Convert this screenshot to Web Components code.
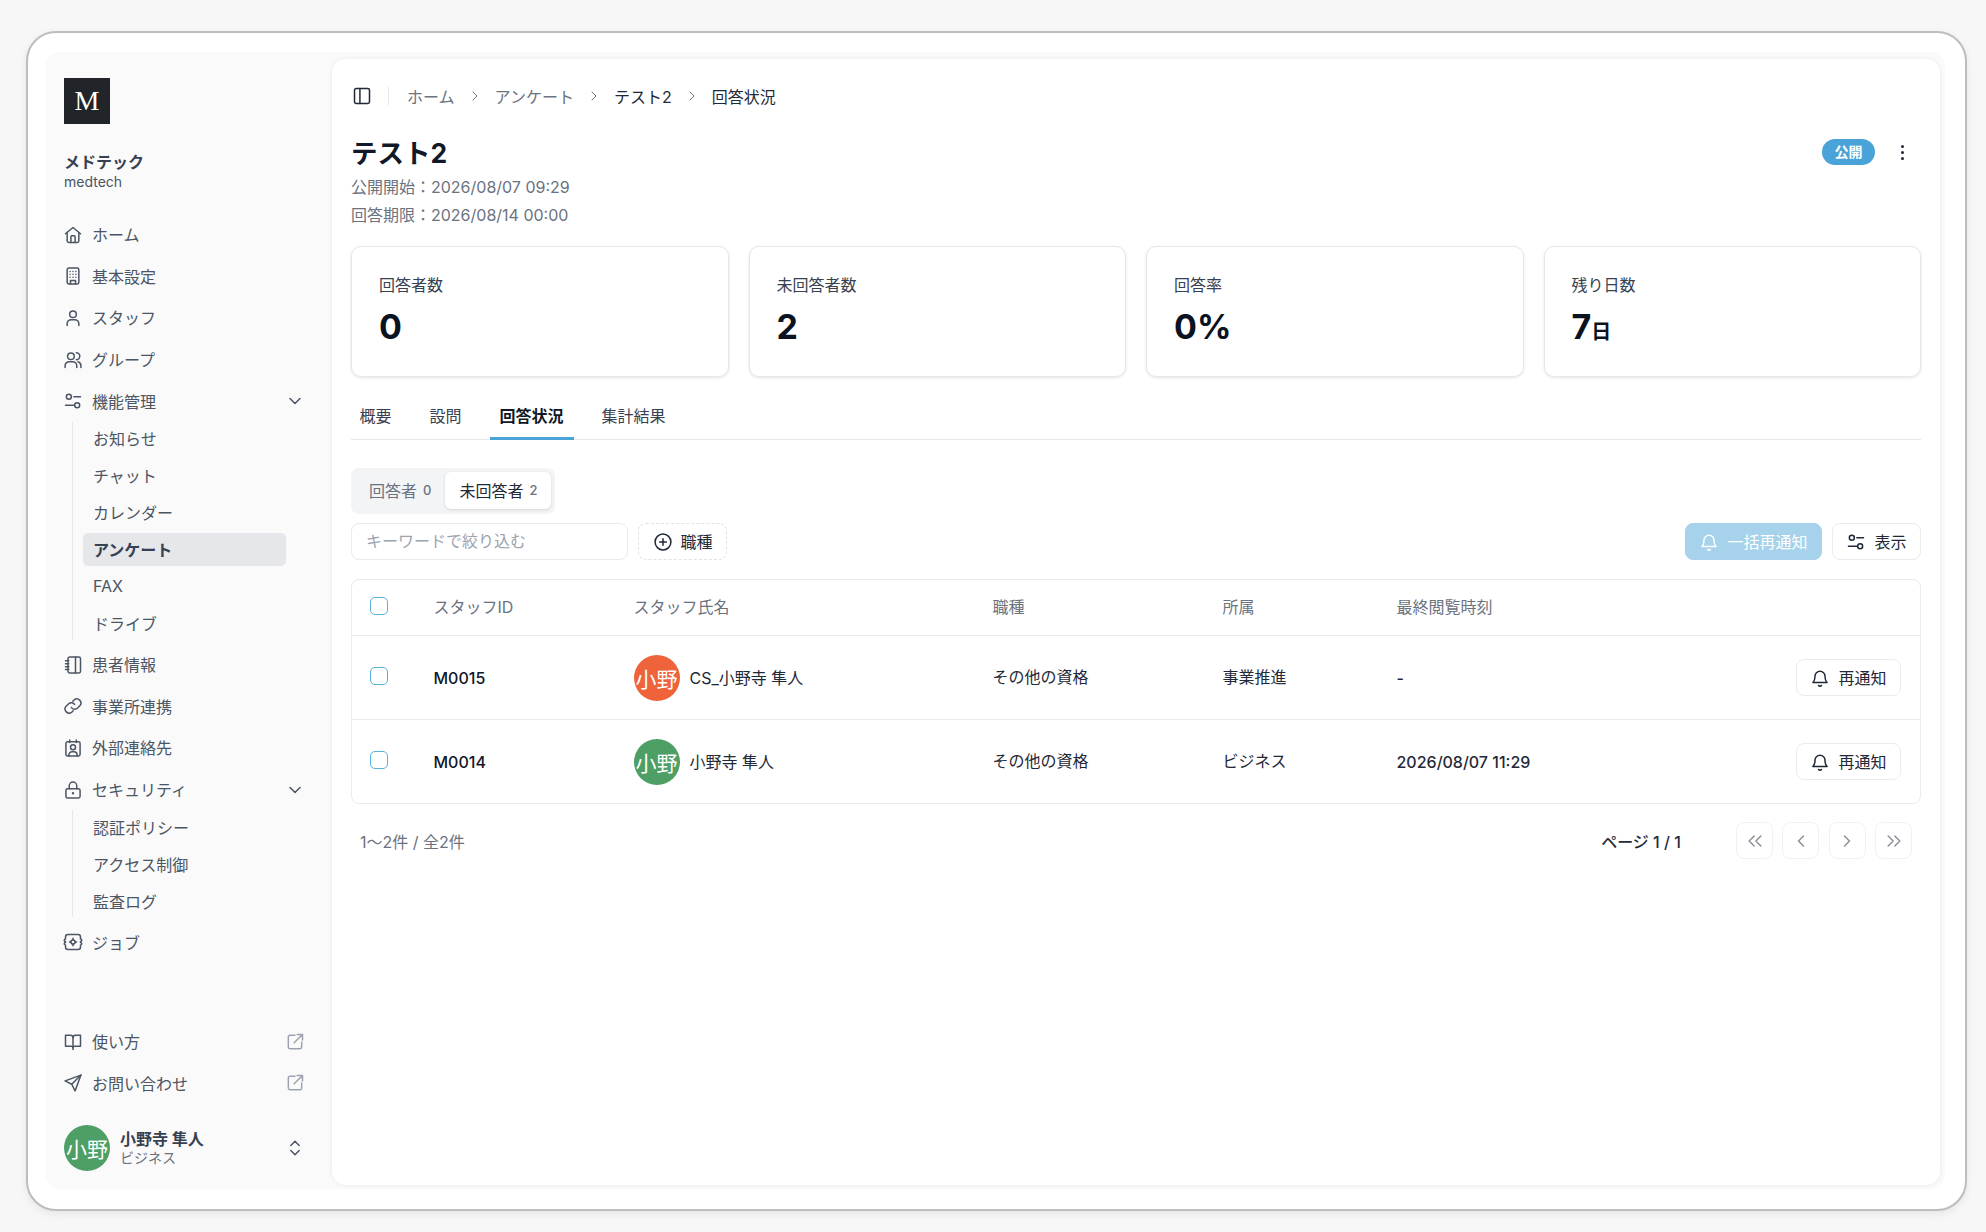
<!DOCTYPE html>
<html lang="ja">
<head>
<meta charset="utf-8">
<title>回答状況</title>
<style>
    html, body { margin: 0; height: 100%; }
    body {
        background: #f7f7f7;
        font-family: Inter, "Noto Sans CJK JP", sans-serif;
        color: #111827;
    }
</style>
</head>
<body>
<app-window>
    <app-sidebar slot="side"></app-sidebar>
    <survey-page></survey-page>
</app-window>

<script>
const ICONS = {
    home: '<path d="M3 10.5 12 3l9 7.5"/><path d="M5 9v10a2 2 0 0 0 2 2h10a2 2 0 0 0 2-2V9"/><path d="M9.5 21v-7a1 1 0 0 1 1-1h3a1 1 0 0 1 1 1v7"/>',
    building: '<rect x="5" y="2.5" width="14" height="19" rx="2"/><path d="M9 21.5v-4h6v4M8.5 6.5h.01M12 6.5h.01M15.5 6.5h.01M8.5 10h.01M12 10h.01M15.5 10h.01M8.5 13.5h.01M12 13.5h.01M15.5 13.5h.01"/>',
    user: '<circle cx="12" cy="7.5" r="4"/><path d="M5 21v-2a5 5 0 0 1 5-5h4a5 5 0 0 1 5 5v2"/>',
    users: '<circle cx="9.5" cy="7.5" r="4"/><path d="M2.5 21v-2a5 5 0 0 1 5-5h4a5 5 0 0 1 5 5v2"/><path d="M16 3.3a4 4 0 0 1 0 8.3M21.5 21v-2a5 5 0 0 0-3.5-4.8"/>',
    sliders: '<circle cx="7" cy="7" r="3"/><circle cx="17" cy="17" r="3"/><path d="M13 7h8M3 17h10"/>',
    notebook: '<rect x="6" y="2.5" width="15" height="19" rx="2"/><path d="M15 2.5v19M3 7h4M3 10.5h4M3 14h4M3 17.5h4"/>',
    link: '<path d="M10 14a5 5 0 0 0 7.5.5l3-3a5 5 0 0 0-7-7l-1.7 1.7"/><path d="M14 10a5 5 0 0 0-7.5-.5l-3 3a5 5 0 0 0 7 7l1.7-1.7"/>',
    contact: '<path d="M8 2.5v3M16 2.5v3"/><rect x="3.5" y="4.5" width="17" height="17" rx="2"/><circle cx="12" cy="11" r="3"/><path d="M7 21.5v-1a4 4 0 0 1 4-4h2a4 4 0 0 1 4 4v1"/>',
    lock: '<rect x="3.5" y="10.5" width="17" height="11" rx="2"/><path d="M7.5 10.5V7a4.5 4.5 0 0 1 9 0v3.5"/><circle cx="12" cy="16" r=".6"/>',
    job: '<path d="M6 3h12a3 3 0 0 1 3 3v2.5a1.5 1.5 0 0 1 0 3v1a1.5 1.5 0 0 1 0 3V18a3 3 0 0 1-3 3H6a3 3 0 0 1-3-3v-2.5a1.5 1.5 0 0 1 0-3v-1a1.5 1.5 0 0 1 0-3V6a3 3 0 0 1 3-3z"/><circle cx="12" cy="12" r="2.5"/><path d="M12 7.5v2M12 14.5v2M7.8 12h1.700M14.500 12h1.700"/>',
    book: '<path d="M12 7v14"/><path d="M3 4h6a3 3 0 0 1 3 3 3 3 0 0 1 3-3h6v13h-7a2 2 0 0 0-2 2 2 2 0 0 0-2-2H3z"/>',
    send: '<path d="M21.500 2.500 2.500 9.500l8 4 4 8z"/><path d="M21.500 2.500 10.500 13.500"/>',
    external: '<path d="M12 4H6a2 2 0 0 0-2 2v12a2 2 0 0 0 2 2h12a2 2 0 0 0 2-2v-6"/><path d="M14.500 3H21v6.500M21 3 11 13"/>',
    chevDown: '<path d="m6 9 6 6 6-6"/>',
    chevUpDown: '<path d="m7 9 5-5 5 5M7 15l5 5 5-5"/>',
    chevRight: '<path d="m9 6 6 6-6 6"/>',
    chevLeft: '<path d="m15 6-6 6 6 6"/>',
    chevsLeft: '<path d="m11 6-6 6 6 6M19 6l-6 6 6 6"/>',
    chevsRight: '<path d="m5 6 6 6-6 6M13 6l6 6-6 6"/>',
    panel: '<rect x="3" y="3" width="18" height="18" rx="2"/><path d="M9.500 3v18"/>',
    plus: '<circle cx="12" cy="12" r="9.500"/><path d="M12 8v8M8 12h8"/>',
    bell: '<path d="M10.300 21a2 2 0 0 0 3.400 0"/><path d="M3.500 17.500h17c-1.500-1.500-2.500-2.500-2.500-7.500a6 6 0 0 0-12 0c0 5-1 6-2.500 7.500z"/>'
};

class AppIcon extends HTMLElement {
    connectedCallback() {
        const size = this.getAttribute('size') || 20;
        const stroke = this.getAttribute('stroke') || 1.8;
        this.attachShadow({ mode: 'open' }).innerHTML = `
            <style>
                :host { display: inline-flex; flex: none; }
                svg { display: block; fill: none; stroke: currentColor; stroke-linecap: round; stroke-linejoin: round; }
            </style>
            <svg width="${size}" height="${size}" viewBox="0 0 24 24" stroke-width="${stroke}">${ICONS[this.getAttribute('name')]}</svg>
        `;
    }
}

class AppWindow extends HTMLElement {
    connectedCallback() {
        this.attachShadow({ mode: 'open' }).innerHTML = `
            <style>
                :host {
                    display: flex;
                    box-sizing: border-box;
                    width: 1941px;
                    height: 1180px;
                    margin: 31px 0 0 26px;
                    padding: 19px 20px 20px 18px;
                    background: #fff;
                    border: 2px solid #bdbdbd;
                    border-radius: 30px;
                    box-shadow: 0 3px 8px rgba(0,0,0,.07);
                }
                .inner {
                    flex: 1;
                    display: flex;
                    min-width: 0;
                    background: #fafafa;
                    border-radius: 14px;
                }
            </style>
            <div class="inner"><slot name="side"></slot><slot></slot></div>
        `;
    }
}

class NavItem extends HTMLElement {
    connectedCallback() {
        const icon = this.getAttribute('icon');
        const trail = this.getAttribute('trail');
        const trailIcon = trail === 'external'
            ? '<app-icon class="ext" name="external" size="20"></app-icon>'
            : trail ? `<app-icon class="tr" name="${trail}" size="20"></app-icon>` : '';
        this.attachShadow({ mode: 'open' }).innerHTML = `
            <style>
                :host {
                    display: flex;
                    align-items: center;
                    height: 41.600px;
                    padding-left: 17px;
                    padding-right: 27px;
                    font-size: 16px;
                    color: #4b5563;
                }
                app-icon { color: #4b5563; }
                .ic { margin-right: 9px; }
                .label { flex: 1; padding-bottom: 1px; }
                .ext { color: #9ca3af; }
            </style>
            <app-icon class="ic" name="${icon}" size="20"></app-icon>
            <span class="label"><slot></slot></span>
            ${trailIcon}
        `;
    }
}

class NavGroup extends HTMLElement {
    connectedCallback() {
        this.attachShadow({ mode: 'open' }).innerHTML = `
            <style>
                :host {
                    display: block;
                    margin-left: 26px;
                    margin-right: 46px;
                    padding: 0 0 0 10px;
                    border-left: 1.500px solid #e5e7eb;
                }
            </style>
            <slot></slot>
        `;
    }
}

class NavSub extends HTMLElement {
    connectedCallback() {
        this.attachShadow({ mode: 'open' }).innerHTML = `
            <style>
                :host {
                    display: flex;
                    align-items: center;
                    height: 33px;
                    margin-bottom: 4px;
                    padding-left: 10px;
                    font-size: 16px;
                    color: #4b5563;
                    border-radius: 5px;
                }
                :host([active]) {
                    background: #e5e7eb;
                    font-weight: 700;
                    color: #374151;
                }
            </style>
            <slot></slot>
        `;
    }
}

class UserAvatar extends HTMLElement {
    connectedCallback() {
        this.attachShadow({ mode: 'open' }).innerHTML = `
            <style>
                :host {
                    display: inline-flex;
                    flex: none;
                    align-items: center;
                    justify-content: center;
                    width: 46px;
                    height: 46px;
                    overflow: hidden;
                    border-radius: 50%;
                    color: #fff;
                    font-size: 21px;
                    white-space: nowrap;
                    background: var(--avatar, #4e9f65);
                }
            </style>
            <slot></slot>
        `;
    }
}

class AppSidebar extends HTMLElement {
    connectedCallback() {
        this.attachShadow({ mode: 'open' }).innerHTML = `
            <style>
                :host {
                    display: flex;
                    flex-direction: column;
                    flex: none;
                    box-sizing: border-box;
                    width: 286px;
                    padding-top: 26px;
                    padding-bottom: 18px;
                }
                .logo {
                    display: flex;
                    align-items: center;
                    justify-content: center;
                    width: 46px;
                    height: 46px;
                    margin-left: 18px;
                    background: #212529;
                    color: #fff;
                    font: 28px "Liberation Serif", serif;
                }
                .org { margin: 27px 0 0 18px; }
                .org b { display: block; font-size: 16px; line-height: 22px; color: #374151; }
                .org span { display: block; font-size: 14px; line-height: 18px; color: #4b5563; }
                nav { margin-top: 23px; }
                .foot { margin-top: auto; }
                .me {
                    display: flex;
                    align-items: center;
                    margin: 21px 27px 0 18px;
                }
                .who { flex: 1; margin-left: 10px; }
                .who b { display: block; font-size: 16px; line-height: 20px; color: #374151; }
                .who span { display: block; font-size: 14px; line-height: 18px; color: #6b7280; }
                .me app-icon { color: #4b5563; }
            </style>
            <div class="logo">M</div>
            <div class="org"><b>メドテック</b><span>medtech</span></div>
            <nav>
                <nav-item icon="home">ホーム</nav-item>
                <nav-item icon="building">基本設定</nav-item>
                <nav-item icon="user">スタッフ</nav-item>
                <nav-item icon="users">グループ</nav-item>
                <nav-item icon="sliders" trail="chevDown">機能管理</nav-item>
                <nav-group>
                    <nav-sub>お知らせ</nav-sub>
                    <nav-sub>チャット</nav-sub>
                    <nav-sub>カレンダー</nav-sub>
                    <nav-sub active>アンケート</nav-sub>
                    <nav-sub>FAX</nav-sub>
                    <nav-sub>ドライブ</nav-sub>
                </nav-group>
                <nav-item icon="notebook">患者情報</nav-item>
                <nav-item icon="link">事業所連携</nav-item>
                <nav-item icon="contact">外部連絡先</nav-item>
                <nav-item icon="lock" trail="chevDown">セキュリティ</nav-item>
                <nav-group>
                    <nav-sub>認証ポリシー</nav-sub>
                    <nav-sub>アクセス制御</nav-sub>
                    <nav-sub>監査ログ</nav-sub>
                </nav-group>
                <nav-item icon="job">ジョブ</nav-item>
            </nav>
            <div class="foot">
                <nav-item icon="book" trail="external">使い方</nav-item>
                <nav-item icon="send" trail="external">お問い合わせ</nav-item>
                <div class="me">
                    <user-avatar>小野</user-avatar>
                    <div class="who"><b>小野寺 隼人</b><span>ビジネス</span></div>
                    <app-icon name="chevUpDown" size="20"></app-icon>
                </div>
            </div>
        `;
    }
}

class StatCard extends HTMLElement {
    connectedCallback() {
        const unit = this.getAttribute('unit');
        this.attachShadow({ mode: 'open' }).innerHTML = `
            <style>
                :host {
                    display: block;
                    box-sizing: border-box;
                    height: 131px;
                    padding: 27px 27px 0;
                    background: #fff;
                    border: 1.500px solid #e5e7eb;
                    border-radius: 10px;
                    box-shadow: 0 1px 3px rgba(0,0,0,.1);
                }
                .label { font-size: 16px; line-height: 22px; color: #374151; }
                .value { margin-top: 9px; font-size: 34px; line-height: 44px; font-weight: 700; color: #0b1220; }
                small { font-size: 20px; font-weight: 700; }
            </style>
            <div class="label">${this.getAttribute('label')}</div>
            <div class="value">${this.getAttribute('value')}${unit ? `<small>${unit}</small>` : ''}</div>
        `;
    }
}

class ActionButton extends HTMLElement {
    connectedCallback() {
        const icon = this.getAttribute('icon');
        this.attachShadow({ mode: 'open' }).innerHTML = `
            <style>
                :host {
                    display: inline-flex;
                    align-items: center;
                    justify-content: center;
                    gap: 8px;
                    box-sizing: border-box;
                    height: 37px;
                    padding: 0 13.500px;
                    font-size: 16px;
                    color: #1f2937;
                    background: #fff;
                    border: 1.500px solid #e9ebee;
                    border-radius: 8px;
                }
                :host([variant=primary]) { background: #a6d2eb; border-color: #a6d2eb; color: #fff; }
                :host([variant=dashed]) { border-style: dashed; border-color: #e0e2e6; }
                :host([variant=page]) { width: 37px; padding: 0; color: #8b9099; border-color: #f1f2f4; }
                .text { padding-bottom: 2px; }
                :host([variant=page]) .text { display: none; }
            </style>
            ${icon ? `<app-icon name="${icon}" size="20"></app-icon>` : ''}
            <span class="text"><slot></slot></span>
        `;
    }
}

class SurveyTable extends HTMLElement {
    connectedCallback() {
        const rows = [
            { id: 'M0015', name: 'CS_小野寺 隼人', color: '#ee633a', job: 'その他の資格', dept: '事業推進', seen: '-' },
            { id: 'M0014', name: '小野寺 隼人', color: '#4e9f65', job: 'その他の資格', dept: 'ビジネス', seen: '2026/08/07 11:29' }
        ];
        this.attachShadow({ mode: 'open' }).innerHTML = `
            <style>
                :host {
                    display: block;
                    background: #fff;
                    border: 1.500px solid #e9ebee;
                    border-radius: 8px;
                }
                .row {
                    display: grid;
                    grid-template-columns: 81.500px 200px 359px 230px 174px 1fr auto;
                    align-items: center;
                    box-sizing: border-box;
                    height: 84px;
                    padding-right: 19px;
                    font-size: 16px;
                    color: #1f2937;
                    border-top: 1.500px solid #e9ebee;
                }
                .row.head { height: 55px; border-top: 0; color: #6b7280; }
                .t { padding-bottom: 3px; }
                .box {
                    width: 16px;
                    height: 16px;
                    margin: -4px 0 0 18px;
                    border: 1.500px solid #5ab0e0;
                    border-radius: 5px;
                }
                .id { font-weight: 500; color: #111827; }
                .person { display: flex; align-items: center; gap: 10px; }
                .person span { padding-bottom: 2px; }
                .seen { font-weight: 500; }
            </style>
            <div class="row head">
                <div class="box"></div><div class="t">スタッフID</div><div class="t">スタッフ氏名</div><div class="t">職種</div><div class="t">所属</div><div class="t">最終閲覧時刻</div>
            </div>
            ${rows.map(r => `
                <div class="row">
                    <div class="box"></div>
                    <div class="id">${r.id}</div>
                    <div class="person"><user-avatar style="--avatar:${r.color}">小野</user-avatar><span>${r.name}</span></div>
                    <div class="t">${r.job}</div>
                    <div class="t">${r.dept}</div>
                    <div class="seen">${r.seen}</div>
                    <action-button icon="bell">再通知</action-button>
                </div>
            `).join('')}
        `;
    }
}

class SurveyPage extends HTMLElement {
    connectedCallback() {
        this.attachShadow({ mode: 'open' }).innerHTML = `
            <style>
                :host {
                    display: block;
                    flex: 1;
                    box-sizing: border-box;
                    min-width: 0;
                    margin: 7px 5px 4px 0;
                    padding: 0 19px;
                    background: #fff;
                    border-radius: 14px;
                    box-shadow: 0 0 4px rgba(0,0,0,.08);
                }
                .crumbs {
                    display: flex;
                    align-items: center;
                    height: 22px;
                    padding-top: 26px;
                    font-size: 16px;
                    color: #6b7280;
                }
                .crumbs .panel { margin: 0 16px 0 1px; color: #1f2937; }
                .crumbs i { width: 1px; height: 18px; margin-right: 18px; background: #e5e7eb; }
                .crumbs .sep { margin: 0 12px; color: #6b7280; }
                .crumbs b { font-weight: 400; color: #1f2937; }
                .top { display: flex; align-items: flex-start; margin-top: 28px; }
                .title { flex: 1; }
                h1 { margin: 0; font-size: 26.500px; line-height: 36px; font-weight: 700; color: #111827; }
                .meta { margin-top: 2px; font-size: 16px; line-height: 28px; color: #6b7280; }
                .status { display: flex; align-items: center; gap: 25px; margin: 4px 17px 0 0; }
                .badge {
                    padding: 0 12.500px;
                    height: 26px;
                    line-height: 26px;
                    font-size: 14px;
                    font-weight: 700;
                    color: #fff;
                    background: #4aa3d8;
                    border-radius: 13px;
                }
                .kebab { display: flex; flex-direction: column; gap: 3px; padding: 0 .500px; }
                .kebab s { width: 3px; height: 3px; border-radius: 50%; background: #1f2937; }
                .stats { display: grid; grid-template-columns: repeat(4, 1fr); gap: 20px; margin-top: 17px; }
                .tabs {
                    display: flex;
                    gap: 18px;
                    box-sizing: border-box;
                    margin-top: 22px;
                    height: 41px;
                    border-bottom: 1.500px solid #e5e7eb;
                    font-size: 16px;
                    line-height: 22px;
                    color: #374151;
                }
                .tabs span { box-sizing: border-box; padding: 6px 10px 0; height: 41px; }
                .tabs span:first-child { margin-left: -1.500px; }
                .tabs .on { font-weight: 700; color: #111827; border-bottom: 3px solid #4aa3d8; }
                .seg {
                    display: flex;
                    width: fit-content;
                    gap: 4px;
                    box-sizing: border-box;
                    height: 46px;
                    margin-top: 28px;
                    padding: 4px;
                    background: #f3f4f6;
                    border-radius: 8px;
                    font-size: 16px;
                    color: #6b7280;
                }
                .seg span { display: flex; align-items: center; gap: 6px; box-sizing: border-box; padding: 0 14px 2px; border-radius: 6px; height: 37px; }
                .seg span:first-child { padding-right: 10px; }
                .seg em { font-style: normal; font-size: 13px; font-weight: 500; }
                .seg .on { background: #fff; color: #1f2937; box-shadow: 0 1px 3px rgba(0,0,0,.12); }
                .seg .on em { color: #6b7280; }
                .tools { display: flex; gap: 10px; margin-top: 9px; }
                .search {
                    box-sizing: border-box;
                    width: 277px;
                    height: 37px;
                    padding: 0 14px;
                    line-height: 35px;
                    font-size: 16px;
                    color: #9ca3af;
                    border: 1.500px solid #e9ebee;
                    border-radius: 8px;
                }
                .grow { flex: 1; }
                survey-table { margin-top: 19px; }
                .pager { display: flex; align-items: center; gap: 9.300px; margin-top: 18px; font-size: 16px; padding: 0 9px; }
                .count { flex: 1; color: #6b7280; }
                .pageno { margin-right: 46px; font-weight: 500; color: #1f2937; }
            </style>
            <div class="crumbs">
                <app-icon class="panel" name="panel" size="20"></app-icon><i></i>
                ホーム<app-icon class="sep" name="chevRight" size="16" stroke="1.500"></app-icon>
                アンケート<app-icon class="sep" name="chevRight" size="16" stroke="1.500"></app-icon>
                <b>テスト2</b><app-icon class="sep" name="chevRight" size="16" stroke="1.500"></app-icon>
                <b>回答状況</b>
            </div>
            <div class="top">
                <div class="title">
                    <h1>テスト2</h1>
                    <div class="meta">公開開始：2026/08/07 09:29<br>回答期限：2026/08/14 00:00</div>
                </div>
                <div class="status"><span class="badge">公開</span><span class="kebab"><s></s><s></s><s></s></span></div>
            </div>
            <div class="stats">
                <stat-card label="回答者数" value="0"></stat-card>
                <stat-card label="未回答者数" value="2"></stat-card>
                <stat-card label="回答率" value="0%"></stat-card>
                <stat-card label="残り日数" value="7" unit="日"></stat-card>
            </div>
            <div class="tabs"><span>概要</span><span>設問</span><span class="on">回答状況</span><span>集計結果</span></div>
            <div class="seg"><span>回答者 <em>0</em></span><span class="on">未回答者 <em>2</em></span></div>
            <div class="tools">
                <div class="search">キーワードで絞り込む</div>
                <action-button variant="dashed" icon="plus">職種</action-button>
                <div class="grow"></div>
                <action-button variant="primary" icon="bell">一括再通知</action-button>
                <action-button icon="sliders">表示</action-button>
            </div>
            <survey-table></survey-table>
            <div class="pager">
                <span class="count">1〜2件 / 全2件</span>
                <span class="pageno">ページ 1 / 1</span>
                <action-button variant="page" icon="chevsLeft"></action-button>
                <action-button variant="page" icon="chevLeft"></action-button>
                <action-button variant="page" icon="chevRight"></action-button>
                <action-button variant="page" icon="chevsRight"></action-button>
            </div>
        `;
    }
}

customElements.define('app-icon', AppIcon);
customElements.define('app-window', AppWindow);
customElements.define('nav-item', NavItem);
customElements.define('nav-group', NavGroup);
customElements.define('nav-sub', NavSub);
customElements.define('user-avatar', UserAvatar);
customElements.define('app-sidebar', AppSidebar);
customElements.define('stat-card', StatCard);
customElements.define('action-button', ActionButton);
customElements.define('survey-table', SurveyTable);
customElements.define('survey-page', SurveyPage);
</script>
</body>
</html>
